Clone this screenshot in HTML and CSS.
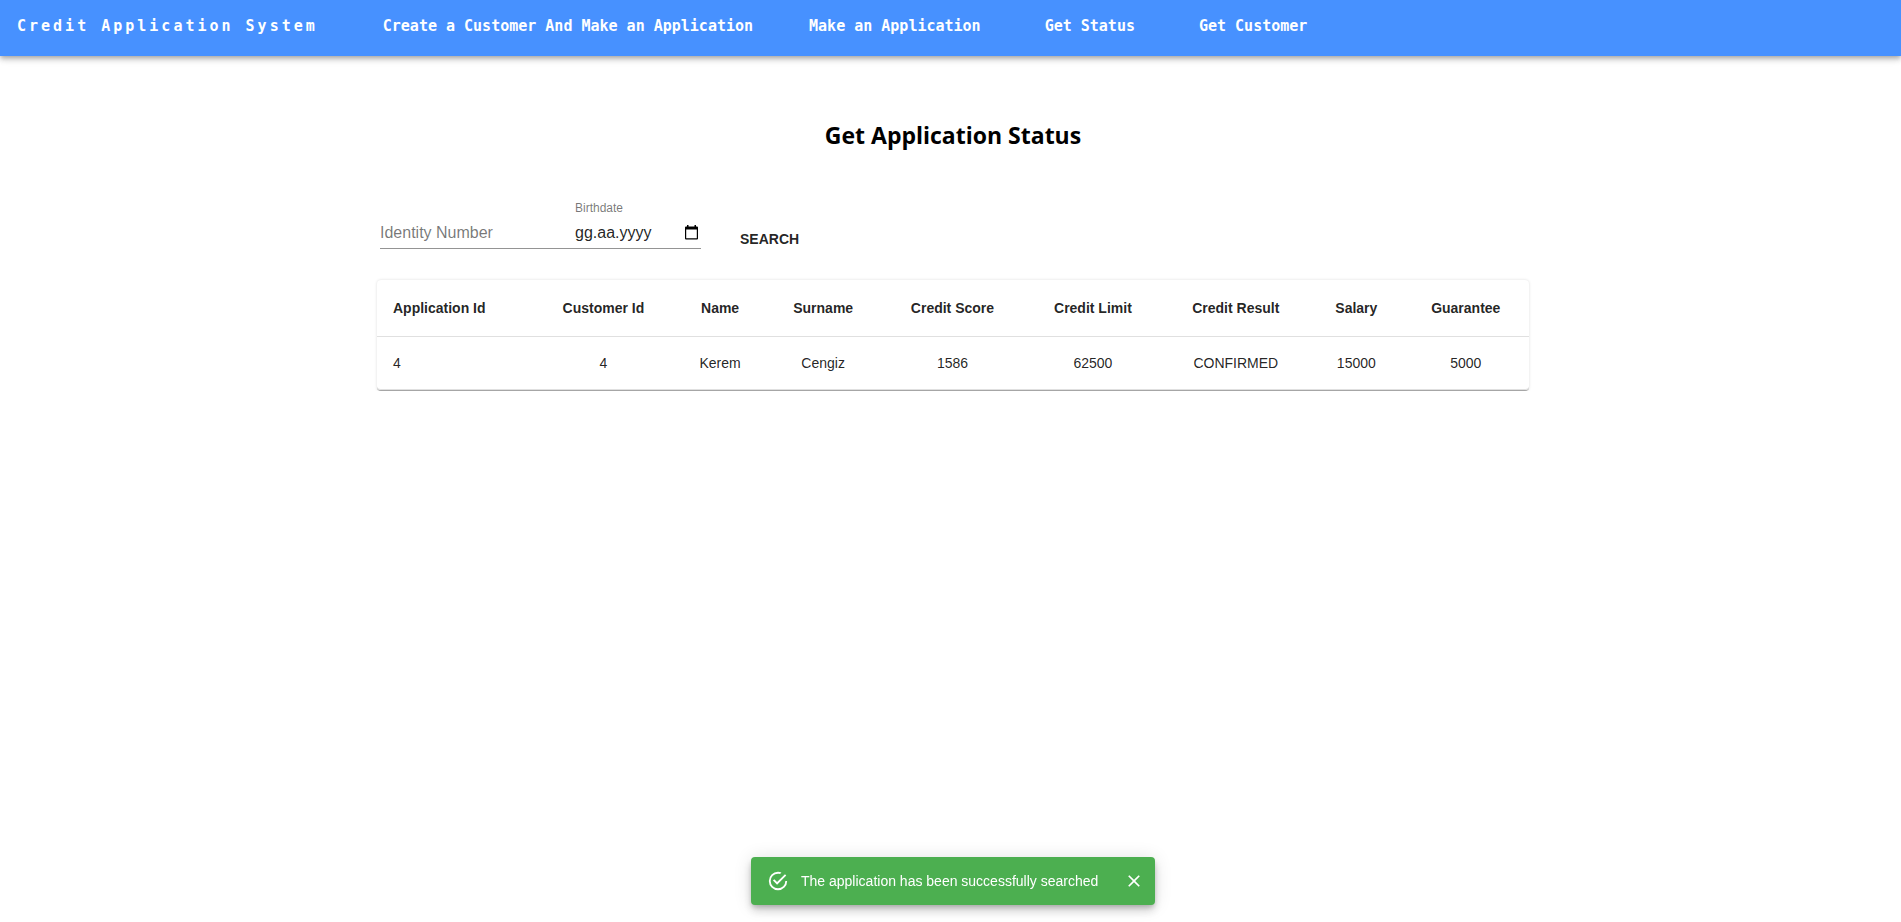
FILE: index.html
```html
<!DOCTYPE html>
<html lang="en">
<head>
<meta charset="utf-8">
<meta name="viewport" content="width=device-width, initial-scale=1">
<title>Credit Application System</title>
<link rel="stylesheet" href="styles.css">
</head>
<body>
<header class="app-bar">
  <a class="brand" href="#">Credit Application System</a>
  <nav class="nav">
    <a href="#">Create a Customer And Make an Application</a>
    <a href="#">Make an Application</a>
    <a class="short" href="#">Get Status</a>
    <a class="short" href="#">Get Customer</a>
  </nav>
</header>

<main class="page">
  <h2 class="title">Get Application Status</h2>

  <form class="search">
    <div class="fields">
      <div class="field field-id">
        <label class="inner-label" for="identity">Identity Number</label>
        <input id="identity" class="input" type="text">
      </div>
      <div class="field field-date">
        <label class="label" for="birthdate">Birthdate</label>
        <div class="date-row">
          <input id="birthdate" class="input" type="text" placeholder="gg.aa.yyyy">
          <button class="picker" type="button" aria-label="Open calendar">
            <svg width="13" height="15" viewBox="0 0 13 15"><path fill="#000" fill-rule="evenodd" d="M2 0h1.500v1.500h6V0H11v1.500h1a1 1 0 0 1 1 1V13.500a1 1 0 0 1-1 1H1a1 1 0 0 1-1-1V2.500a1 1 0 0 1 1-1h1zM1.200 4.600v8.600h10.600V4.600z"/></svg>
          </button>
        </div>
      </div>
    </div>
    <button class="search-btn" type="submit">SEARCH</button>
  </form>

  <div class="card">
    <table class="table">
      <thead>
        <tr><th>Application Id</th><th>Customer Id</th><th>Name</th><th>Surname</th><th>Credit Score</th><th>Credit Limit</th><th>Credit Result</th><th>Salary</th><th>Guarantee</th></tr>
      </thead>
      <tbody>
        <tr><td>4</td><td>4</td><td>Kerem</td><td>Cengiz</td><td>1586</td><td>62500</td><td>CONFIRMED</td><td>15000</td><td>5000</td></tr>
      </tbody>
    </table>
  </div>
</main>

<div class="snackbar">
  <div class="alert" role="alert">
    <svg class="alert-icon" width="22" height="22" viewBox="0 0 24 24" fill="currentColor"><path d="M20,12A8,8 0 0,1 12,20A8,8 0 0,1 4,12A8,8 0 0,1 12,4C12.76,4 13.5,4.11 14.2,4.31L15.77,2.74C14.61,2.26 13.34,2 12,2A10,10 0 0,0 2,12A10,10 0 0,0 12,22A10,10 0 0,0 22,12M7.91,10.08L6.5,11.5L11,16L21,6L19.59,4.58L11,13.17L7.91,10.08Z"/></svg>
    <span class="alert-text">The application has been successfully searched</span>
    <button class="close" type="button" aria-label="Close">
      <svg width="20" height="20" viewBox="0 0 24 24" fill="currentColor"><path d="M19 6.41L17.59 5 12 10.59 6.41 5 5 6.41 10.59 12 5 17.59 6.41 19 12 13.41 17.59 19 19 17.59 13.41 12z"/></svg>
    </button>
  </div>
</div>
</body>
</html>
```
FILE: styles.css
```css
* { box-sizing: border-box; }

body {
  margin: 0;
  background: #fff;
  color: rgba(0, 0, 0, 0.87);
  font-family: "Liberation Sans", Arial, sans-serif;
  font-size: 14px;
}

button {
  border: 0;
  padding: 0;
  background: none;
  color: inherit;
  font: inherit;
  cursor: pointer;
}

svg { display: block; }

.app-bar {
  display: flex;
  align-items: center;
  gap: 65px;
  min-height: 56px;
  padding: 0 17px 5px;
  background: #4791ff;
  color: #fff;
  font: 700 15px/24px "DejaVu Sans Mono", monospace;
  white-space: nowrap;
  box-shadow: 0 2px 4px -1px rgba(0, 0, 0, 0.2), 0 4px 5px 0 rgba(0, 0, 0, 0.14), 0 1px 10px 0 rgba(0, 0, 0, 0.12);
}

.app-bar a {
  color: inherit;
  text-decoration: none;
}

.brand { letter-spacing: 3px; }

.nav {
  display: flex;
  gap: 56px;
}

.nav .short { margin-left: 8px; }

.page {
  max-width: 1205px;
  margin: 0 auto;
  padding: 64px 24px 0 29px;
}

.title {
  margin: 0;
  color: #000;
  font: 700 23px/30px "Open Sans", "Noto Sans", sans-serif;
  text-align: center;
}

.search {
  display: flex;
  align-items: flex-end;
  gap: 39px;
  margin-top: 50px;
  padding-left: 3px;
}

.fields {
  display: flex;
  align-items: flex-end;
  border-bottom: 1px solid #949494;
}

.field-id {
  display: grid;
  width: 195px;
}

/* The resting label shares the input's grid cell. */
.inner-label,
.field-id .input {
  grid-area: 1 / 1;
}

.inner-label {
  padding-top: 2px;
  color: rgba(0, 0, 0, 0.54);
  font-size: 16px;
  line-height: 30px;
}

.field-date { width: 126px; }

.label {
  display: block;
  color: rgba(0, 0, 0, 0.54);
  font-size: 12px;
  line-height: 16px;
}

.input {
  display: block;
  width: 100%;
  min-width: 0;
  height: 32px;
  padding: 2px 0 0;
  border: 0;
  outline: 0;
  background: none;
  color: inherit;
  font: 16px/24px "Liberation Sans", Arial, sans-serif;
}

.input::placeholder {
  color: rgba(0, 0, 0, 0.87);
  opacity: 1;
}

.date-row {
  display: flex;
  align-items: center;
  padding-right: 3px;
}

.search-btn {
  font-weight: 700;
  line-height: 20px;
}

.card {
  margin-top: 31px;
  border-bottom: 1px solid #a6a6a6;
  border-radius: 4px;
  background: #fff;
  box-shadow: 0 0 3px 0 rgba(0, 0, 0, 0.14);
}

.table {
  width: 100%;
  border-spacing: 0;
  line-height: 20px;
  text-align: center;
}

.table th,
.table td {
  padding: 16px;
  border-bottom: 1px solid #e0e0e0;
}

.table th { line-height: 24px; }

.table td:first-child { border-bottom-left-radius: 4px; }
.table td:last-child { border-bottom-right-radius: 4px; }

.table th:first-child,
.table td:first-child { text-align: left; }

.snackbar {
  position: fixed;
  left: 5px;
  right: 0;
  bottom: 17px;
  display: flex;
  justify-content: center;
}

.alert {
  display: flex;
  align-items: center;
  min-width: 404px;
  min-height: 48px;
  padding: 6px 8px 6px 16px;
  border-radius: 4px;
  background: #4caf50;
  color: #fff;
  line-height: 20px;
  box-shadow: 0 3px 5px -1px rgba(0, 0, 0, 0.2), 0 6px 10px 0 rgba(0, 0, 0, 0.14), 0 1px 18px 0 rgba(0, 0, 0, 0.12);
}

.alert-icon { margin-right: 12px; }

.close {
  margin-left: auto;
  padding: 3px;
}
```
